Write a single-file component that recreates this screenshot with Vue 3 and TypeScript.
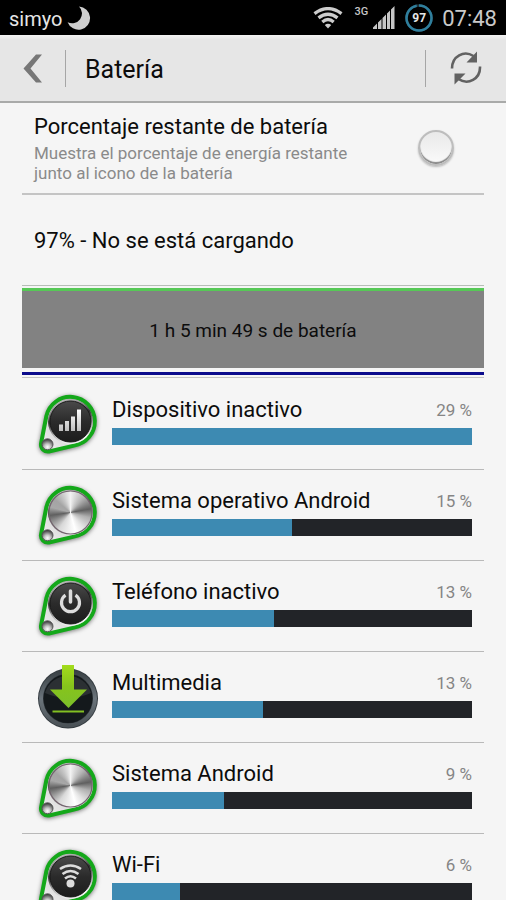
<script setup lang="ts">
import { ref } from 'vue'

type IconKind = 'signal' | 'metal' | 'power' | 'download' | 'wifi'

interface UsageItem {
  name: string
  percent: number
  fill: number
  icon: IconKind
}

const showPercentage = ref(false)

const items: UsageItem[] = [
  { name: 'Dispositivo inactivo', percent: 29, fill: 100, icon: 'signal' },
  { name: 'Sistema operativo Android', percent: 15, fill: 50, icon: 'metal' },
  { name: 'Teléfono inactivo', percent: 13, fill: 45, icon: 'power' },
  { name: 'Multimedia', percent: 13, fill: 42, icon: 'download' },
  { name: 'Sistema Android', percent: 9, fill: 31, icon: 'metal' },
  { name: 'Wi-Fi', percent: 6, fill: 19, icon: 'wifi' },
]
</script>

<template>
  <div class="screen">
    <svg class="defs" width="0" height="0" aria-hidden="true">
      <defs>
        <linearGradient id="ringGrad" x1="0" y1="0" x2="0.3" y2="1">
          <stop offset="0" stop-color="#d4d4d4" />
          <stop offset="0.3" stop-color="#8a8a8a" />
          <stop offset="0.5" stop-color="#303030" />
          <stop offset="0.75" stop-color="#a8a8a8" />
          <stop offset="1" stop-color="#efefef" />
        </linearGradient>
        <linearGradient id="plateGrad" x1="0" y1="1" x2="1" y2="0">
          <stop offset="0" stop-color="#f4f4f4" />
          <stop offset="0.5" stop-color="#cfcfcf" />
          <stop offset="1" stop-color="#8b8b8b" />
        </linearGradient>
        <linearGradient id="darkGrad" x1="0" y1="0" x2="0" y2="1">
          <stop offset="0" stop-color="#4a4a4a" />
          <stop offset="0.5" stop-color="#2b2b2b" />
          <stop offset="1" stop-color="#1c1c1c" />
        </linearGradient>
        <linearGradient id="glyphGrad" x1="0" y1="0" x2="0" y2="1">
          <stop offset="0" stop-color="#ffffff" />
          <stop offset="1" stop-color="#bdbdbd" />
        </linearGradient>
        <radialGradient id="rivetGrad" cx="0.5" cy="0.75" r="0.7">
          <stop offset="0" stop-color="#ffffff" />
          <stop offset="0.4" stop-color="#c5c5c5" />
          <stop offset="1" stop-color="#3c3c3c" />
        </radialGradient>
        <linearGradient id="rimGrad" x1="0" y1="0" x2="0" y2="1">
          <stop offset="0" stop-color="#3a4145" />
          <stop offset="0.5" stop-color="#6b747b" />
          <stop offset="1" stop-color="#4b5257" />
        </linearGradient>
        <linearGradient id="arrowGrad" x1="0" y1="0" x2="0" y2="1">
          <stop offset="0" stop-color="#a3dc1c" />
          <stop offset="0.5" stop-color="#86c41c" />
          <stop offset="1" stop-color="#7cc02a" />
        </linearGradient>
      </defs>
    </svg>

    <div class="statusbar">
      <span class="carrier">simyo</span>
      <svg class="moon" width="24" height="26" viewBox="0 0 24 26" aria-hidden="true">
        <path d="M12 1.5A11.6 11.6 0 1 1 .6 17.2A9.8 9.8 0 0 0 12 1.5Z" fill="#cfcfcf" />
      </svg>
      <div class="indicators">
        <svg class="wifi" width="30" height="22" viewBox="0 0 30 22" aria-hidden="true">
          <g fill="none" stroke="#cccccc" stroke-width="3.300">
            <path d="M1.500 6.600Q15-3.400 28.500 6.600" />
            <path d="M5.500 10.900Q15 3.500 24.500 10.900" />
            <path d="M9.300 14.900Q15 10.200 20.700 14.900" />
          </g>
          <path d="M11.800 18Q15 15.500 18.200 18L15 21.500Z" fill="#cccccc" />
        </svg>
        <span class="network">3G</span>
        <svg class="bars" width="22" height="24" viewBox="0 0 22 24" aria-hidden="true">
          <path d="M0 23V21.500L4 17.500V23ZM5 23V16.500L8.500 13V23ZM9.500 23V12L13 8.500V23ZM14 23V7.500L17 4.500V23ZM18 23V3.500L21.500 0V23Z" fill="#c6c6c6" />
        </svg>
        <span class="battery">
          <svg width="28" height="28" viewBox="0 0 28 28" aria-hidden="true">
            <circle cx="14" cy="14" r="12.500" fill="none" stroke="#20363f" stroke-width="2.500" />
            <circle cx="14" cy="14" r="12.500" fill="none" stroke="#2f7f9d" stroke-width="2.500" pathLength="100" stroke-dasharray="97 3" transform="rotate(-90 14 14)" />
          </svg>
          <span class="battery-value">97</span>
        </span>
        <span class="clock">07:48</span>
      </div>
    </div>

    <header class="actionbar">
      <button class="back" type="button" aria-label="Atrás">
        <svg width="20" height="29" viewBox="0 0 20 29" aria-hidden="true">
          <path d="M13 .5H19L7.500 14.500L19 28.500H13L.5 14.500Z" fill="#777777" />
        </svg>
      </button>
      <h1>Batería</h1>
      <button class="refresh" type="button" aria-label="Actualizar">
        <svg width="32" height="34" viewBox="0 0 32 34" aria-hidden="true">
          <g fill="none" stroke="#626262" stroke-width="2.600">
            <path d="M2 17.500C2 5 14-1 23.500 5" />
            <path d="M30 15.500C30.500 28 18 34.500 8.500 28" />
          </g>
          <path d="M27 .5V11.500H16.500ZM4.500 33.500V22.500H15.500Z" fill="#626262" />
        </svg>
      </button>
    </header>

    <main class="content">
      <label class="preference">
        <span class="preference-text">
          <span class="label">Porcentaje restante de batería</span>
          <span class="summary">Muestra el porcentaje de energía restante junto al icono de la batería</span>
        </span>
        <input v-model="showPercentage" type="checkbox" class="toggle" />
      </label>

      <p class="state">97% - No se está cargando</p>

      <div class="graph">
        <div class="graph-area">1 h 5 min 49 s de batería</div>
        <div class="graph-base"></div>
      </div>

      <ul class="usage">
        <li v-for="item in items" :key="item.name" class="row">
          <svg v-if="item.icon === 'download'" class="icon" width="64" height="64" viewBox="0 0 64 64" aria-hidden="true">
            <circle cx="32" cy="33.500" r="30" fill="#343b40" />
            <circle cx="32" cy="33.500" r="27" fill="none" stroke="url(#rimGrad)" stroke-width="4" />
            <circle cx="32" cy="33.500" r="24.500" fill="#14191c" />
            <path d="M9 28A24 24 0 0 1 55 28Q32 38 9 28Z" fill="#2b3033" />
            <path d="M26 0H38V24.500H51L32.500 43L14 24.500H26Z" fill="url(#arrowGrad)" />
            <path d="M16.500 46.500H48" stroke="#82bf22" stroke-width="2" />
          </svg>
          <svg v-else class="icon" width="64" height="64" viewBox="0 0 64 64" aria-hidden="true">
            <path class="plate" d="M10.400 24L5 51.500A7 7 0 0 0 13 59.500L38 53.600A24.500 24.500 0 1 0 10.400 24Z" fill="url(#plateGrad)" stroke="#14a81a" stroke-width="4" />
            <circle cx="34.500" cy="29.500" r="22.500" fill="url(#ringGrad)" />
            <template v-if="item.icon === 'metal'">
              <foreignObject x="13" y="8" width="43" height="43">
                <div class="metal"></div>
              </foreignObject>
              <circle cx="34.500" cy="29.500" r="21.500" fill="none" stroke="#73646e" stroke-width="1.200" />
            </template>
            <circle v-else cx="34.500" cy="29.500" r="20.500" fill="url(#darkGrad)" stroke="#191919" />
            <circle cx="11.500" cy="52.300" r="5.500" fill="url(#rivetGrad)" stroke="#555555" />
            <path v-if="item.icon === 'signal'" d="M23 32.500H27V39H23ZM29 29H33V39H29ZM35 24.500H39V39H35ZM41 17.500H45V39H41Z" fill="url(#glyphGrad)" />
            <g v-if="item.icon === 'power'" fill="none" stroke="#dddddd" stroke-width="3.200">
              <path d="M29.500 21.200A9 9 0 1 0 39.500 21.200" />
              <path d="M34.500 17V28" stroke-linecap="round" stroke-width="3.500" />
            </g>
            <g v-if="item.icon === 'wifi'" fill="none" stroke="#dddddd" stroke-width="2.600">
              <path d="M24 22Q34.500 15 45 22" />
              <path d="M26.500 27Q34.500 21 42.500 27" />
              <path d="M29 31.500Q34.500 27 40 31.500" />
              <circle cx="34.500" cy="36.500" r="4" fill="#dddddd" stroke="none" />
            </g>
          </svg>
          <div class="details">
            <div class="line">
              <span class="label">{{ item.name }}</span>
              <span class="percent">{{ item.percent }} %</span>
            </div>
            <div class="track">
              <div class="fill" :style="{ width: item.fill + '%' }"></div>
            </div>
          </div>
        </li>
      </ul>
    </main>
  </div>
</template>

<style>
body {
  margin: 0;
  background: #f5f5f5;
}
</style>

<style scoped>
.screen {
  display: flex;
  flex-direction: column;
  height: 100vh;
  overflow: hidden;
  background: #f5f5f5;
  color: #0c0c0c;
  font-family: Roboto, "Liberation Sans", sans-serif;
}
.defs {
  position: absolute;
}
.statusbar {
  flex: none;
  display: flex;
  align-items: center;
  height: 35px;
  padding: 0 9px;
  background: #000;
  color: #e6e6e6;
}
.carrier {
  padding-top: 2px;
  font-size: 20px;
}
.moon {
  margin-left: 5px;
}
.indicators {
  display: flex;
  align-items: center;
  margin-left: auto;
}
.network {
  align-self: flex-start;
  margin: 2px 5px 0 11px;
  font-size: 11px;
  font-weight: 500;
  line-height: 12px;
  color: #c6c6c6;
}
.battery {
  display: grid;
  place-items: center;
  margin: 0 9px 0 10px;
}
.battery svg,
.battery-value {
  grid-area: 1 / 1;
}
.battery-value {
  font-size: 12px;
  font-weight: 700;
}
.clock {
  padding-top: 2px;
  font-size: 22px;
  color: #c9c9c9;
}
.actionbar {
  flex: none;
  box-sizing: border-box;
  display: flex;
  align-items: center;
  height: 68px;
  border-bottom: 2px solid #a9aaa9;
  background: linear-gradient(#f3f3f3, #e6e6e6 5px);
}
.back,
.refresh {
  display: flex;
  align-items: center;
  justify-content: center;
  height: 37px;
  padding: 0;
  border: 0 solid #a6a6a6;
  background: none;
}
.back {
  width: 66px;
  border-right-width: 1px;
}
.refresh {
  width: 81px;
  margin-left: auto;
  border-left-width: 1px;
}
h1 {
  margin: 0;
  padding: 4px 0 0 19px;
  font-size: 25px;
  font-weight: 400;
  line-height: 28px;
}
.content {
  flex: 1;
  min-height: 0;
  overflow-y: auto;
  scrollbar-width: none;
  padding: 0 22px;
}
.preference {
  display: flex;
  align-items: center;
  justify-content: space-between;
  box-sizing: border-box;
  height: 92px;
  padding: 0 30px 0 12px;
  border-bottom: 2px solid #c4c4c4;
}
.preference-text {
  display: flex;
  flex-direction: column;
  gap: 2px;
  width: 330px;
}
.label {
  font-size: 22px;
  line-height: 28px;
}
.summary {
  font-size: 17px;
  line-height: 20px;
  color: #8a8a8a;
}
.toggle {
  appearance: none;
  flex: none;
  box-sizing: border-box;
  width: 36px;
  height: 36px;
  margin: 0;
  border: 2px solid #bdbdbd;
  border-radius: 50%;
  background: linear-gradient(#e9e9e9, #fafafa);
  box-shadow: 0 1px 2px #bbb, inset 0 -2px 1px #888;
}
.toggle:checked {
  background: #3d8ab2;
}
.state {
  margin: 0;
  padding: 1px 12px 0;
  font-size: 22px;
  line-height: 89px;
  border-bottom: 1px solid #b6beb6;
}
.graph {
  padding-top: 2px;
  border-bottom: 1px solid #c4c4c4;
}
.graph-area {
  box-sizing: border-box;
  height: 80px;
  border-top: 3px solid #56c856;
  background: #828282;
  font-size: 19px;
  line-height: 80px;
  text-align: center;
}
.graph-base {
  margin: 4px 0 2px;
  height: 3px;
  background: #0b0b8c;
}
.usage {
  margin: 0;
  padding: 1px 0 0;
  list-style: none;
}
.row {
  display: flex;
  box-sizing: border-box;
  height: 91px;
  padding: 13px 12px 0 14px;
  border-bottom: 1px solid #b9b9b9;
}
.icon {
  flex: none;
  overflow: visible;
}
.plate {
  filter: drop-shadow(0 1px 2px rgba(0, 0, 0, 0.5));
}
.metal {
  width: 43px;
  height: 43px;
  border-radius: 50%;
  background: conic-gradient(#f2f2f2 0deg, #b5b5b5 40deg, #606060 80deg, #b0b0b0 105deg, #e4e4e4 140deg, #ffffff 165deg, #d8d8d8 215deg, #9a9a9a 240deg, #606060 262deg, #a8a8a8 285deg, #a4a4a4 310deg, #c8c8c8 335deg, #f2f2f2 360deg);
}
.details {
  flex: 1;
  margin-left: 12px;
}
.line {
  display: flex;
  align-items: center;
  justify-content: space-between;
  height: 36px;
}
.percent {
  font-size: 17px;
  color: #858585;
}
.track {
  height: 17px;
  background: #222428;
}
.fill {
  height: 100%;
  background: #3d8ab2;
}
</style>
